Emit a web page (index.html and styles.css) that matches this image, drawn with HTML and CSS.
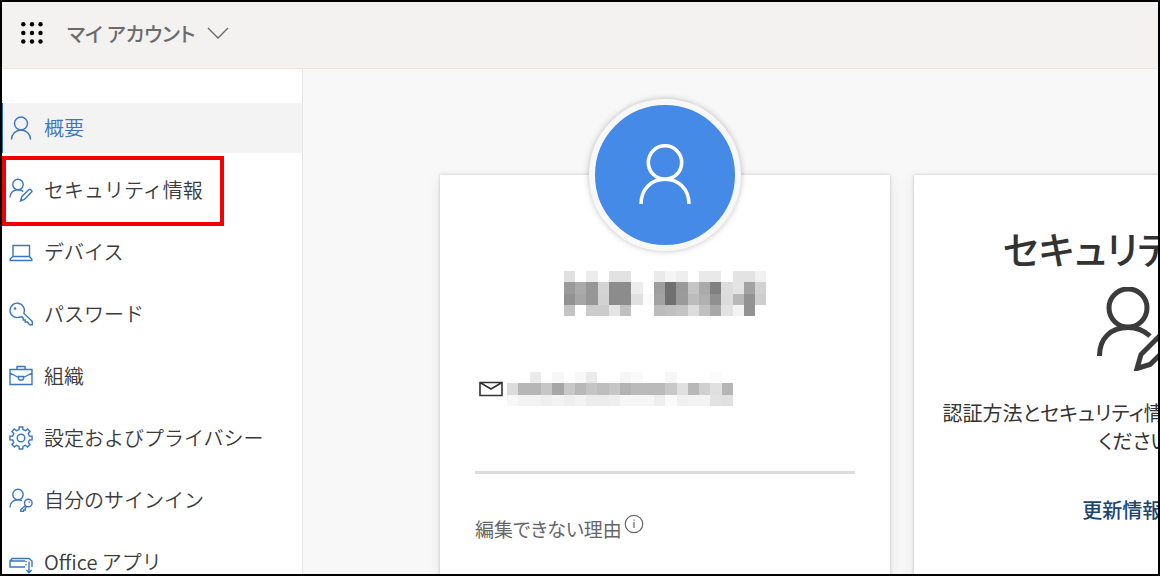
FILE: index.html
```
<!DOCTYPE html>
<html lang="ja">
<head>
	<meta charset="UTF-8">
	<title>マイ アカウント</title>
	<link rel="stylesheet" href="styles.css">
</head>
<body>
	<header class="header">
		<button class="waffle" aria-label="アプリ起動ツール">
			<svg width="22" height="22" viewBox="0 0 22 22">
				<circle cx="2.3" cy="2.3" r="2.2"/><circle cx="11" cy="2.3" r="2.2"/><circle cx="19.5" cy="2.3" r="2.2"/>
				<circle cx="2.3" cy="11" r="2.2"/><circle cx="11" cy="11" r="2.2"/><circle cx="19.5" cy="11" r="2.2"/>
				<circle cx="2.3" cy="19.5" r="2.2"/><circle cx="11" cy="19.5" r="2.2"/><circle cx="19.5" cy="19.5" r="2.2"/>
			</svg>
		</button>
		<button class="account">
			<span>マイ アカウント</span>
			<svg width="22" height="12" viewBox="0 0 22 12"><path d="M1 1l10 10L21 1"/></svg>
		</button>
	</header>

	<div class="page">
		<nav class="menu">
			<a class="item active" href="#">
				<svg class="icon" viewBox="0 0 24 24"><circle cx="12" cy="7.5" r="6.5"/><path d="M2.5 23.500a9.500 9.500 0 0 1 19 0"/></svg>
				概要
			</a>
			<a class="item marked" href="#">
				<svg class="icon" viewBox="0 0 24 24"><circle cx="9" cy="6.500" r="5.200"/><path d="M1 19.500c0-5 3.500-7.800 8-7.800 2.300 0 4 .7 5.300 1.900M11.500 23l1.300-4.300 7.200-7.200c1-1 3.800 1.200 2.600 2.600l-7.200 7.300z"/></svg>
				セキュリティ情報
			</a>
			<a class="item" href="#">
				<svg class="icon" viewBox="0 0 24 24"><path d="M4 5.500h16.500v11H4zM3.800 16.500L1.200 19v1.500h21.600V19l-2.500-2.500"/></svg>
				デバイス
			</a>
			<a class="item" href="#">
				<svg class="icon" viewBox="0 0 24 24"><path d="M14.800 11.200A7.200 7.200 0 1 0 10.500 15.200l2.500-.4 1.200 1.200v2h2v2h2l2.500 2.700H23.300v-3.200z"/><circle class="dot" cx="6" cy="6.500" r="1.300"/></svg>
				パスワード
			</a>
			<a class="item" href="#">
				<svg class="icon" viewBox="0 0 24 24"><path d="M1 5.500h22v15H1zM8 5.500v-3h8v3M1 9l8.500 4.500M23 9l-8.500 4.500M9.500 12.500h5V15l-1 1h-3l-1-1z"/></svg>
				組織
			</a>
			<a class="item" href="#">
				<svg class="icon" viewBox="0 0 24 24"><circle cx="12" cy="12" r="3.800"/><path id="gear"/></svg>
				設定およびプライバシー
			</a>
			<a class="item" href="#">
				<svg class="icon" viewBox="0 0 24 24"><circle cx="9" cy="6.500" r="5.200"/><path d="M1 19.500c0-5 3.500-7.800 8-7.800 1.500 0 2.800.3 4 1"/><circle cx="19.300" cy="15" r="3.800"/><path d="M16.500 17.500l-4.700 4V23.500h2.700v-1.500h1.700v-1.700l1.500-1.800"/><circle class="dot" cx="20.300" cy="14" r=".8"/></svg>
				自分のサインイン
			</a>
			<a class="item" href="#">
				<svg class="icon" viewBox="0 0 24 24"><path d="M16 17H1v-6l2-2.500h17l3 2.500v6M1.200 11H16M20 11.500v11M17.300 20l2.700 2.700 2.700-2.700M17 11v1.300M17 14v1.300"/></svg>
				Office アプリ
			</a>
		</nav>

		<main class="main">
			<section class="card profile">
				<div class="avatar">
					<svg width="54" height="62" viewBox="0 0 54 62"><circle cx="27" cy="18.500" r="16.700"/><path d="M3 60c0-15 10.500-24.800 24-24.800S51 45 51 60"/></svg>
				</div>
				<svg class="mosaic name" width="216" height="45" viewBox="0 0 19.200 4" preserveAspectRatio="none"></svg>
				<div class="mail">
					<svg class="envelope" width="24" height="16" viewBox="0 0 24 16"><path d="M1 1.500h22v13H1zM1 1.500l11 6.500 11-6.500"/></svg>
					<svg class="mosaic address" width="226" height="34" viewBox="0 0 20 3" preserveAspectRatio="none"></svg>
				</div>
				<hr class="line">
				<p class="reason">編集できない理由<svg class="info" width="20" height="20" viewBox="0 0 20 20"><circle cx="10" cy="10" r="8.700"/><path d="M10 8v6M10 5.500v1.200"/></svg></p>
			</section>

			<section class="card security">
				<h2>セキュリティ情報</h2>
				<svg width="84" height="84" viewBox="0 0 84 84"><circle cx="31" cy="21" r="19"/><path d="M2.500 69C2.500 51 14 40.500 31 40.500c9 0 16 3 22 8.500M40 81.500l4-14L68 43.500c5-5 15 4 9.500 10L53 77.500z"/></svg>
				<p>認証方法とセキュリティ情報を常に最新にして<br>ください。</p>
				<a class="update" href="#">更新情報<span>&gt;</span></a>
			</section>
		</main>
	</div>

	<script type="text/javascript">
		//モザイクの濃淡（16進数、1マスにつき1値）
		var nameRows = [
			'e0 ff ec ff e2 e2 ff ff ea f5 ee ff e9 e9 ff e3 e3 f1',
			'9a aa 96 d4 8c 8c ec ff 9e 70 99 c5 aa 80 dd e4 a2 d2',
			'92 a6 96 d2 8c 8c e0 fa a2 70 9a bc b0 90 dc b8 92 ce',
			'c4 ff cc cc e4 c0 ff ff bc c0 c4 dc c0 a8 e2 f3 92 ff'
		];
		var addressRows = [
			'ff ff ea ff f7 ff f8 ea ff ff f6 fa ff ff f6 ff ff ff fb ff',
			'dc b6 b6 c6 a6 c8 b8 c4 be c6 b2 ba ba ba c8 e0 b8 d0 e0 b6',
			'f8 f3 f3 ee f3 ee f3 ec ec ee f6 f6 f6 ee fa f0 f3 f3 e2 e0'
		];

		function drawMosaic(selector, rows, offset){
			var str = '';
			for (var y = 0; y < rows.length; y++) {
				var cells = rows[y].split(' ');
				for (var x = 0; x < cells.length; x++) {
					str += '<rect x="' + (x + offset) + '" y="' + y + '" width="1" height="1" fill="#' + cells[x] + cells[x] + cells[x] + '"/>';
				}
			}
			document.querySelector(selector).innerHTML = str;
		}

		//歯車の輪郭
		function drawGear(){
			var steps = [[-13, 8.6], [-9, 11.2], [9, 11.2], [13, 8.6]];
			var points = [];
			for (var i = 0; i < 8; i++) {
				for (var j = 0; j < steps.length; j++) {
					var a = (i * 45 + steps[j][0]) * Math.PI / 180;
					points.push((12 + steps[j][1] * Math.cos(a)).toFixed(2) + ' ' + (12 + steps[j][1] * Math.sin(a)).toFixed(2));
				}
			}
			document.querySelector('#gear').setAttribute('d', 'M' + points.join('L') + 'z');
		}

		drawMosaic('.name', nameRows, 0.6);
		drawMosaic('.address', addressRows, 0);
		drawGear();
	</script>
</body>
</html>
```
FILE: styles.css
```
*{
	box-sizing: border-box;
}

body{
	margin: 0;
	height: 100vh;
	border: 2px solid #000;
	display: flex;
	flex-direction: column;
	overflow: hidden;
	background-color: #f8f8f8;
	color: #333;
	font-family: "Noto Sans CJK JP", sans-serif;
	font-size: 20px;
	font-weight: 350;
}

svg{
	display: block;
	flex: none;
	fill: none;
}

button{
	padding: 0;
	border: none;
	background: none;
	font: inherit;
}

.header{
	flex: none;
	display: flex;
	align-items: center;
	gap: 24px;
	height: 67px;
	padding: 0 19px 4px;
	border-bottom: 1px solid #e6e6e6;
	background-color: #f3f2f1;
}

.waffle svg{
	fill: #000;
}

.account{
	display: flex;
	align-items: center;
	gap: 12px;
	color: #6b6b6b;
	font-size: 20px;
	font-weight: 500;
	font-feature-settings: "palt";
}

.account svg{
	stroke: #666;
	stroke-width: 1.3;
}

.page{
	flex: 1;
	display: flex;
	min-height: 0;
}

.menu{
	flex: none;
	display: flex;
	flex-direction: column;
	gap: 12px;
	width: 301px;
	padding-top: 34px;
	border-right: 1px solid #e6e6e6;
	background-color: #fff;
}

.item{
	position: relative;
	flex: none;
	display: flex;
	align-items: center;
	gap: 11px;
	height: 50px;
	padding: 0 0 1px 6px;
	border-left: 1px solid transparent;
	color: #3b3b3b;
	text-decoration: none;
}

.item.active{
	border-left-color: #2f6fc0;
	background-color: #f3f3f3;
	color: #3a76c4;
}

/* 赤枠の強調 */
.item.marked::after{
	content: "";
	position: absolute;
	top: -9px;
	right: 78px;
	bottom: -11px;
	left: -1px;
	border: 4px solid #f40000;
}

.icon{
	width: 24px;
	height: 24px;
	stroke: #3a76c4;
	stroke-width: 1.4;
}

.icon .dot{
	fill: #3a76c4;
	stroke: none;
}

.main{
	flex: 1;
	min-width: 0;
	display: grid;
	grid-template-columns: 450px 450px;
	gap: 24px;
	padding: 106px 0 0 137px;
	overflow: hidden;
}

.card{
	min-height: 480px;
	padding: 0 35px;
	background-color: #fff;
	box-shadow: 0 0 3px rgba(0,0,0,.2), 0 4px 14px rgba(0,0,0,.08);
	font-weight: 400;
	font-feature-settings: "palt";
}

.avatar{
	display: flex;
	align-items: center;
	justify-content: center;
	width: 152px;
	height: 152px;
	margin: -76px auto 20px;
	border: 6px solid #f8f8f8;
	border-radius: 50%;
	background-color: #448ae6;
	box-shadow: 0 0 6px rgba(0,0,0,.25);
}

.avatar svg{
	stroke: #fff;
	stroke-width: 3.6;
}

.mosaic{
	shape-rendering: crispEdges;
}

.name{
	margin: 0 auto 56px;
}

.mail{
	display: flex;
	align-items: center;
	gap: 4px;
	padding-left: 4px;
}

.envelope{
	stroke: #333;
	stroke-width: 1.6;
}

.line{
	height: 3px;
	margin: 65px 0 40px;
	border: none;
	background-color: #dcdcdc;
}

.reason{
	display: flex;
	align-items: flex-start;
	gap: 2px;
	margin: 0;
	color: #666;
	font-size: 19px;
	line-height: 30px;
}

.info{
	stroke: #666;
	stroke-width: 1.2;
}

.security{
	display: flex;
	flex-direction: column;
	align-items: center;
	padding: 48px 25px 0;
	text-align: center;
}

.security h2{
	margin: 0 0 14px;
	font-size: 38px;
	font-weight: 500;
	line-height: 50px;
}

.security svg{
	stroke: #3b3b3b;
	stroke-width: 5;
}

.security p{
	margin: 28px 0 40px;
	line-height: 28px;
}

.update{
	display: flex;
	gap: 22px;
	color: #1b4470;
	font-weight: 500;
	line-height: 30px;
	text-decoration: none;
}
```
